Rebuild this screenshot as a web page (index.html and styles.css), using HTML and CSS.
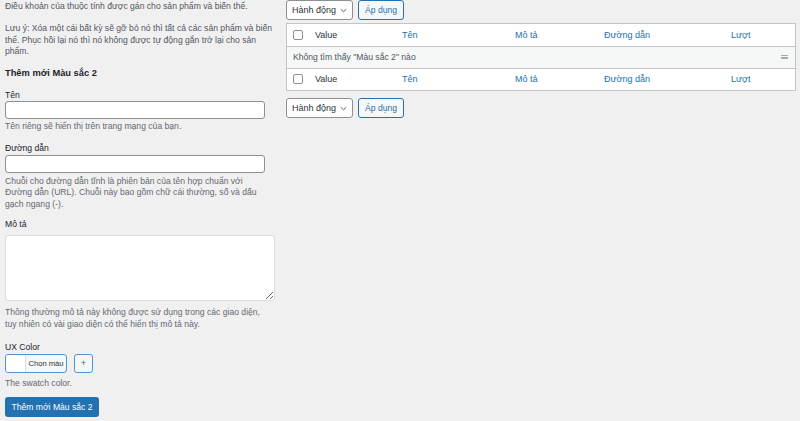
FILE: index.html
```html
<!DOCTYPE html>
<html lang="vi">
<head>
<meta charset="utf-8">
<title>Màu sắc 2</title>
<link rel="stylesheet" href="styles.css">
</head>
<body>
<div class="wrap">
  <div class="col-left">
    <p class="intro">Điều khoản của thuộc tính được gán cho sản phẩm và biến thể.</p>
    <p class="intro note">Lưu ý: Xóa một cái bất kỳ sẽ gỡ bỏ nó thì tất cả các sản phẩm và biến thể. Phục hồi lại nó thì nó không được tự động gắn trở lại cho sản phẩm.</p>
    <h2 class="title">Thêm mới Màu sắc 2</h2>
    <div class="field f-name">
      <label class="lbl">Tên</label>
      <input class="txt" type="text">
      <p class="help">Tên riêng sẽ hiển thị trên trang mạng của bạn.</p>
    </div>
    <div class="field f-slug">
      <label class="lbl">Đường dẫn</label>
      <input class="txt" type="text">
      <p class="help">Chuỗi cho đường dẫn tĩnh là phiên bản của tên hợp chuẩn với Đường dẫn (URL). Chuỗi này bao gồm chữ cái thường, số và dấu gạch ngang (-).</p>
    </div>
    <div class="field f-desc">
      <label class="lbl">Mô tả</label>
      <textarea class="area"></textarea>
      <p class="help">Thông thường mô tả này không được sử dụng trong các giao diện, tuy nhiên có vài giao diện có thể hiển thị mô tả này.</p>
    </div>
    <div class="field f-color">
      <label class="lbl">UX Color</label>
      <div class="picker-row">
        <button class="picker"><span class="swatch"></span><span class="pick-text">Chọn màu</span></button>
        <button class="plus">+</button>
      </div>
      <p class="help">The swatch color.</p>
    </div>
    <button class="primary">Thêm mới Màu sắc 2</button>
  </div>
  <div class="col-right">
    <div class="actions">
      <div class="select">Hành động<svg class="chev" width="7" height="5" viewBox="0 0 7 5"><path d="M0.8 1.2 L3.5 3.8 L6.2 1.2" fill="none" stroke="#50575e" stroke-width="1"/></svg></div>
      <button class="apply">Áp dụng</button>
    </div>
    <div class="table">
      <div class="row head">
        <span class="cb"><span class="box"></span></span>
        <span class="c-dark">Value</span>
        <span class="c-link">Tên</span>
        <span class="c-link">Mô tả</span>
        <span class="c-link">Đường dẫn</span>
        <span class="c-link">Lượt</span>
      </div>
      <div class="row empty">
        <span class="empty-text">Không tìm thấy "Màu sắc 2" nào</span>
        <span class="handle"></span>
      </div>
      <div class="row foot">
        <span class="cb"><span class="box"></span></span>
        <span class="c-dark">Value</span>
        <span class="c-link">Tên</span>
        <span class="c-link">Mô tả</span>
        <span class="c-link">Đường dẫn</span>
        <span class="c-link">Lượt</span>
      </div>
    </div>
    <div class="actions bottom">
      <div class="select">Hành động<svg class="chev" width="7" height="5" viewBox="0 0 7 5"><path d="M0.8 1.2 L3.5 3.8 L6.2 1.2" fill="none" stroke="#50575e" stroke-width="1"/></svg></div>
      <button class="apply">Áp dụng</button>
    </div>
  </div>
</div>
</body>
</html>
```

FILE: styles.css
```css
* { box-sizing: border-box; }
html, body {
  margin: 0;
  background: #f0f0f1;
  font-family: "Liberation Sans", Arial, sans-serif;
  font-size: 8.6px;
  color: #3c434a;
  height: 100%;
}
.wrap {
  display: flex;
  gap: 11px;
  padding: 0 4px 0 5px;
}
.col-left {
  width: 270px;
  flex: none;
  padding-top: 1px;
}
.col-right {
  flex: 1;
}
p { margin: 0; }
.intro {
  line-height: 11.5px;
  color: #50575e;
}
.note { margin-top: 10.5px; }
.title {
  font-size: 9.3px;
  font-weight: bold;
  color: #1d2327;
  margin: 9px 0 0;
  line-height: 12px;
}
.lbl {
  display: block;
  line-height: 12px;
  color: #1d2327;
}
.f-name { margin-top: 10px; }
.f-slug { margin-top: 9px; }
.f-slug .lbl { margin-bottom: 1px; }
.f-desc { margin-top: 8px; }
.f-desc .lbl { margin-bottom: 5px; }
.f-color { margin-top: 11px; }
.txt {
  display: block;
  width: 260px;
  height: 18.5px;
  border: 1px solid #8c8f94;
  border-radius: 3px;
  background: #fff;
  margin: 0;
  padding: 0;
}
.area {
  display: block;
  width: 270px;
  height: 66px;
  border: 1px solid #dcdcde;
  border-radius: 3px;
  background: #fff;
  margin: 0;
  resize: vertical;
}
.help {
  max-width: 262px;
  line-height: 11.5px;
  color: #646970;
  margin-top: 2px;
}
.f-slug .help { margin-top: 2.5px; }
.f-desc .help { margin-top: 6px; }
.f-color .help { margin-top: 5px; }
.picker-row {
  display: flex;
  gap: 7px;
  margin-top: 1px;
}
.picker {
  display: flex;
  align-items: stretch;
  height: 19px;
  width: 62px;
  padding: 0;
  border: 1px solid #4f94d4;
  border-radius: 3px;
  background: #f6f7f7;
  font: inherit;
  font-size: 7.6px;
  color: #2c3338;
  overflow: hidden;
}
.swatch {
  width: 20px;
  background: #fff;
  border-right: 1px solid #dcdcde;
}
.pick-text {
  flex: 1;
  display: flex;
  align-items: center;
  justify-content: center;
}
.plus {
  width: 19px;
  height: 19px;
  padding: 0 0 1px;
  border: 1px solid #4f94d4;
  border-radius: 3px;
  background: #f6f7f7;
  color: #2271b1;
  font: inherit;
  font-size: 9px;
}
.primary {
  display: block;
  margin-top: 7.5px;
  height: 20px;
  width: 94px;
  padding: 0;
  border: 0;
  border-radius: 3px;
  background: #2271b1;
  color: #fff;
  font: inherit;
  font-size: 8.6px;
}
.actions {
  display: flex;
  gap: 5px;
  height: 20px;
}
.actions.bottom { margin-top: 7.5px; }
.select {
  width: 67px;
  height: 20px;
  border: 1px solid #8c8f94;
  border-radius: 3px;
  background: #fff;
  display: flex;
  align-items: center;
  justify-content: space-between;
  padding: 0 5px;
  color: #2c3338;
  font-size: 9px;
}
.chev { flex: none; }
.apply {
  width: 46px;
  height: 20px;
  padding: 0;
  border: 1px solid #2271b1;
  border-radius: 3px;
  background: #f6f7f7;
  color: #2271b1;
  font: inherit;
  font-size: 8.6px;
}
.table {
  margin-top: 2.5px;
  border: 1px solid #c3c4c7;
  background: #fff;
  font-size: 9px;
}
.row {
  display: grid;
  grid-template-columns: 28px 87px 113px 89px 127px 1fr;
  align-items: center;
  height: 23px;
}
.head { border-bottom: 1px solid #c3c4c7; }
.foot { border-top: 1px solid #c3c4c7; height: 22px; }
.empty {
  background: #f6f7f7;
  display: flex;
  justify-content: space-between;
  padding: 0 7px 0 6px;
  height: 21px;
  color: #50575e;
  font-size: 8.6px;
}
.cb { padding-left: 6px; display: flex; }
.box {
  width: 10px;
  height: 10px;
  border: 1px solid #8c8f94;
  border-radius: 2px;
  background: #fff;
}
.c-dark { color: #2c3338; }
.c-link { color: #2271b1; }
.handle {
  width: 7px;
  height: 4px;
  border-top: 1px solid #a7aaad;
  border-bottom: 1px solid #a7aaad;
  position: relative;
}
.handle::after {
  content: "";
  position: absolute;
  left: 0;
  right: 0;
  top: 0.5px;
  border-top: 1px solid #a7aaad;
}
```
